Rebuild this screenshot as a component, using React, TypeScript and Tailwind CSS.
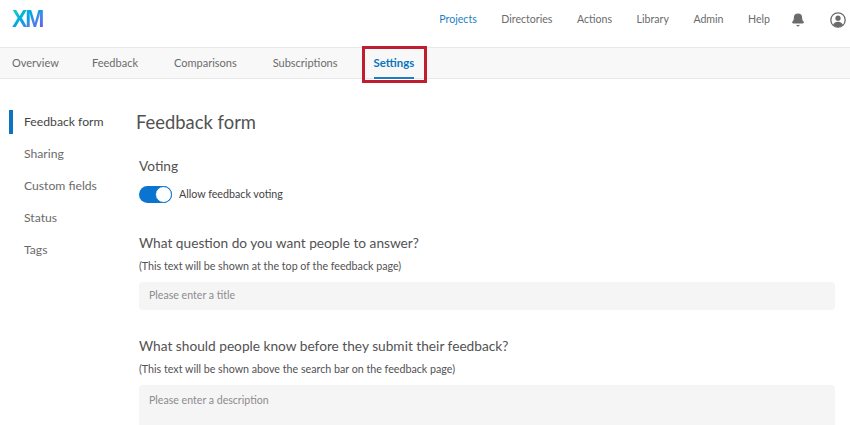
import { Bell } from "lucide-react";

const navItems = ["Directories", "Actions", "Library", "Admin"];
const tabs = ["Feedback", "Comparisons", "Subscriptions"];
const sideItems = ["Sharing", "Custom fields", "Status", "Tags"];

const App = () => {
  return (
    <div className="h-[425px] w-[850px] overflow-hidden bg-white font-['Lato',sans-serif] text-[#525252]">
      <header className="flex h-[48px] items-center justify-between border-b border-[#e8e8e8] pb-[8px] pl-[12px] pr-[1px]">
        <span className="bg-gradient-to-br from-[#1fd8b8] via-[#0b9be8] to-[#6a4be8] bg-clip-text font-['Liberation_Sans',sans-serif] text-[23px] font-bold leading-none tracking-[-2px] text-transparent">
          XM
        </span>
        <nav className="flex items-center text-[10.6px]">
          <a className="mr-[24.5px] text-[#1c7fc4]">Projects</a>
          {navItems.map((item) => (
            <a key={item} className="mr-[24.5px] text-[#6b6b6b]">
              {item}
            </a>
          ))}
          <a className="mr-[21px] text-[#6b6b6b]">Help</a>
          <Bell className="mr-[25px] h-[14px] w-[14px] fill-[#6b6b6b] text-[#6b6b6b]" />
          <svg viewBox="0 0 16 16" className="mr-[3px] h-[16px] w-[16px]">
            <defs>
              <clipPath id="avatar">
                <circle cx="8" cy="8" r="7.2" />
              </clipPath>
            </defs>
            <circle cx="8" cy="8" r="7.2" fill="none" stroke="#6b6b6b" strokeWidth="1.3" />
            <circle cx="8" cy="6.2" r="2.6" fill="#6b6b6b" />
            <ellipse cx="8" cy="13.6" rx="5" ry="3.8" fill="#6b6b6b" clipPath="url(#avatar)" />
          </svg>
        </nav>
      </header>

      <div className="relative flex h-[31px] items-center gap-[36px] border-b border-[#e8e8e8] bg-[#f8f8f8] pl-[12px] text-[11px] text-[#6b6b6b]">
        <a className="w-[44px] whitespace-nowrap">Overview</a>
        {tabs.map((tab) => (
          <a key={tab}>{tab}</a>
        ))}
        <a className="relative text-[11.4px] font-bold text-[#0b74bd]">
          Settings
          <span className="absolute -bottom-[7px] left-0 h-[2px] w-full bg-[#1c7fc4]" />
        </a>
        <div className="absolute -top-[2px] left-[362px] h-[37px] w-[65px] border-[3px] border-[#bf1e2e]" />
      </div>

      <div className="flex">
        <aside className="w-[136px] shrink-0 pl-[9px] pt-[31px] text-[12.2px]">
          <div className="flex h-[24px] items-center border-l-[4px] border-[#0b74bd] pl-[11px] text-[#444]">
            Feedback form
          </div>
          <ul className="mt-[4px]">
            {sideItems.map((item) => (
              <li key={item} className="flex h-[32px] items-center pl-[15px] text-[#6b6b6b]">
                {item}
              </li>
            ))}
          </ul>
        </aside>

        <main className="w-[699px] pt-[31px]">
          <h1 className="h-[25px] text-[18.4px] leading-[25px] text-[#525252]">Feedback form</h1>
          <section className="pl-[3px]">
            <h2 className="mt-[21px] text-[13.7px] leading-[20px]">Voting</h2>
            <div className="mt-[10px] flex items-center gap-[7px]">
              <div className="flex h-[17px] w-[33px] items-center justify-end rounded-full bg-[#0b74d0]">
                <span className="h-[17px] w-[17px] rounded-full border border-[#0b74d0] bg-white" />
              </div>
              <span className="text-[10.7px] text-[#444]">Allow feedback voting</span>
            </div>

            <h2 className="mt-[30px] text-[13.7px] leading-[20px]">What question do you want people to answer?</h2>
            <p className="mt-[6px] text-[10.7px] leading-[14px]">(This text will be shown at the top of the feedback page)</p>
            <div className="mt-[9px] flex h-[28px] items-center rounded-[4px] bg-[#f5f5f5] pl-[10px] text-[10.6px] text-[#8c8c8c]">
              Please enter a title
            </div>

            <h2 className="mt-[26px] text-[13.7px] leading-[20px]">What should people know before they submit their feedback?</h2>
            <p className="mt-[6px] text-[10.7px] leading-[14px]">(This text will be shown above the search bar on the feedback page)</p>
            <div className="mt-[9px] h-[60px] rounded-[4px] bg-[#f5f5f5] pl-[10px] pt-[8px] text-[10.6px] text-[#8c8c8c]">
              Please enter a description
            </div>
          </section>
        </main>
      </div>
    </div>
  );
};

export default App;
